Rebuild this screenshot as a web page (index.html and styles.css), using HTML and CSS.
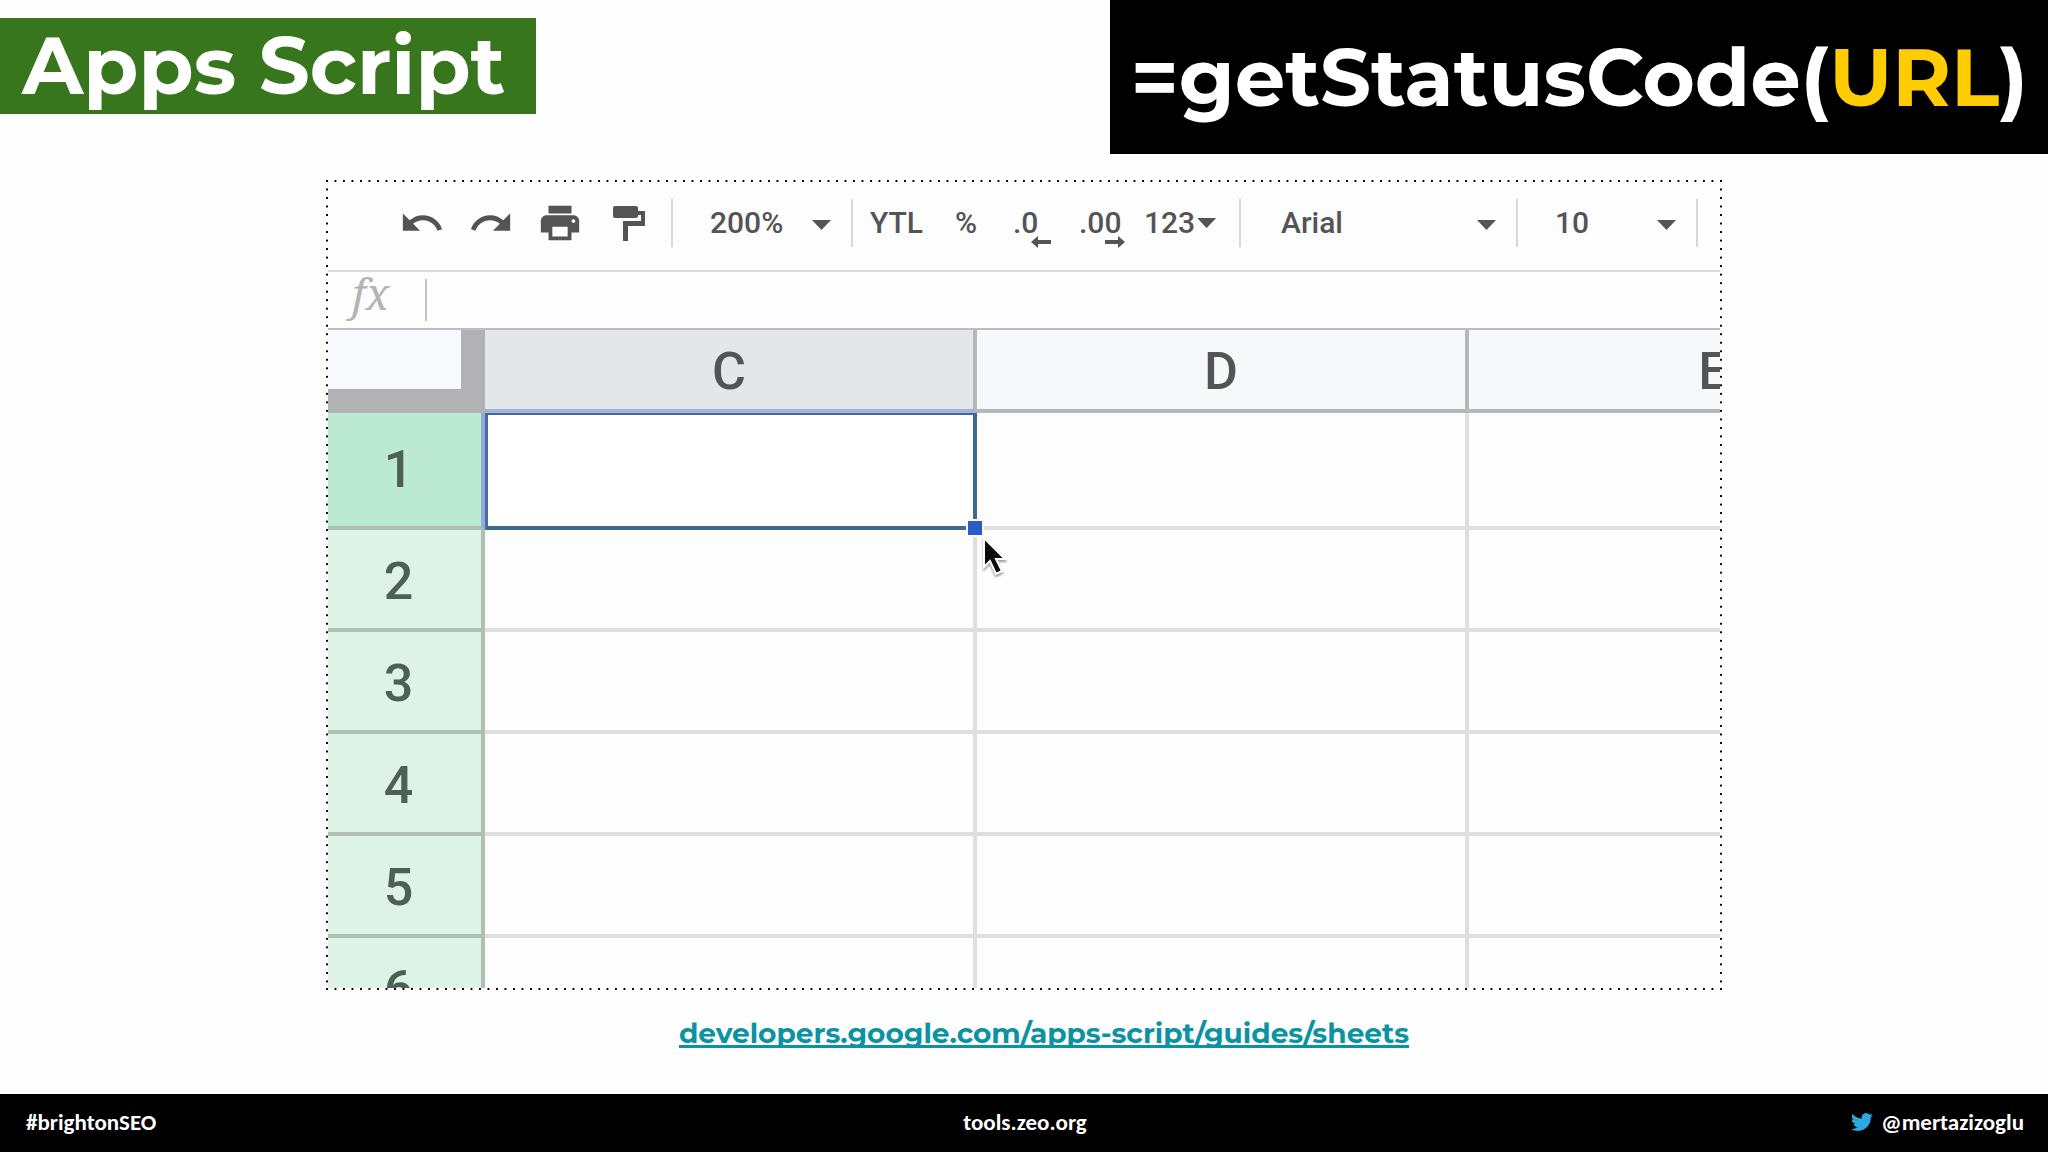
FILE: index.html
```html
<!DOCTYPE html>
<html lang="en">
<head>
  <meta charset="UTF-8">
  <meta name="viewport" content="width=device-width, initial-scale=1.0">
  <title>Apps Script - getStatusCode</title>
  <link rel="stylesheet" href="styles.css">
</head>
<body>
  <header class="header">
    <h1 class="title">Apps Script</h1>
    <p class="formula">=getStatusCode(<span>URL</span>)</p>
  </header>

  <main class="main">
    <div class="frame">
      <div class="sheet">
        <!-- Toolbar -->
        <div class="toolbar">
          <div class="group icons">
            <button type="button" aria-label="Undo">
              <svg viewBox="0 0 24 24" width="46" height="46"><path d="M12.5 8c-2.65 0-5.05.99-6.9 2.6L2 7v9h9l-3.62-3.62c1.39-1.16 3.16-1.88 5.12-1.88 3.54 0 6.55 2.31 7.6 5.5l2.37-.78C21.08 11.03 17.15 8 12.5 8z"/></svg>
            </button>
            <button type="button" aria-label="Redo">
              <svg viewBox="0 0 24 24" width="46" height="46"><path d="M18.4 10.6C16.55 8.99 14.15 8 11.5 8c-4.65 0-8.58 3.03-9.96 7.22L3.9 16c1.05-3.19 4.05-5.5 7.6-5.5 1.95 0 3.73.72 5.12 1.88L13 16h9V7l-3.6 3.6z"/></svg>
            </button>
            <button type="button" aria-label="Print">
              <svg viewBox="0 0 24 24" width="46" height="46"><path d="M19 8H5c-1.66 0-3 1.34-3 3v6h4v4h12v-4h4v-6c0-1.66-1.34-3-3-3zm-3 11H8v-5h8v5zm3-7c-.55 0-1-.45-1-1s.45-1 1-1 1 .45 1 1-.45 1-1 1zm-1-9H6v4h12V3z"/></svg>
            </button>
            <button type="button" aria-label="Paint format">
              <svg viewBox="0 0 32 35" width="32" height="35"><path d="M2 0h21q2 0 2 2v3h7v15H15v15h-5V15h18V9h-3v1q0 2-2 2H2q-2 0-2-2V2q0-2 2-2z"/></svg>
            </button>
          </div>

          <div class="group drop zoom">
            <select aria-label="Zoom"><option>200%</option></select>
          </div>

          <div class="group formats">
            <button type="button">YTL</button>
            <button type="button">%</button>
            <button type="button">.0
              <svg class="dec" viewBox="0 0 20 12" width="20" height="12"><path d="M0 6l7-6v4h13v4H7v4z"/></svg>
            </button>
            <button type="button">.00
              <svg class="inc" viewBox="0 0 20 12" width="20" height="12"><path d="M20 6l-7-6v4H0v4h13v4z"/></svg>
            </button>
            <button type="button" class="more">123<span class="caret"></span></button>
          </div>

          <div class="group drop font">
            <select aria-label="Font"><option>Arial</option></select>
          </div>

          <div class="group drop size">
            <select aria-label="Font size"><option>10</option></select>
          </div>
        </div>

        <!-- Formula bar -->
        <div class="formula-bar">
          <label for="fx">fx</label>
          <input type="text" id="fx">
        </div>

        <table class="grid">
          <colgroup>
            <col class="col-head">
            <col>
            <col>
            <col>
          </colgroup>
          <thead>
            <tr>
              <td class="corner"></td>
              <th class="active" scope="col">C</th>
              <th scope="col">D</th>
              <th scope="col">E</th>
            </tr>
          </thead>
          <tbody>
            <tr class="current">
              <th scope="row">1</th>
              <td class="selected">
                <span class="handle"></span>
                <svg class="cursor" viewBox="0 0 26 42" width="26" height="42"><path d="M3 3v29l6-6 6 13 6-3-6-12h9z"/></svg>
              </td>
              <td></td>
              <td></td>
            </tr>
            <tr><th scope="row">2</th><td></td><td></td><td></td></tr>
            <tr><th scope="row">3</th><td></td><td></td><td></td></tr>
            <tr><th scope="row">4</th><td></td><td></td><td></td></tr>
            <tr><th scope="row">5</th><td></td><td></td><td></td></tr>
            <tr><th scope="row">6</th><td></td><td></td><td></td></tr>
          </tbody>
        </table>
      </div>
    </div>

    <a class="docs-link" href="https://developers.google.com/apps-script/guides/sheets">developers.google.com/apps-script/guides/sheets</a>
  </main>

  <footer class="footer">
    <span>#brightonSEO</span>
    <span>tools.zeo.org</span>
    <span class="handle-name">
      <svg viewBox="0 0 24 24" width="22" height="22"><path d="M23.953 4.57a10 10 0 01-2.825.775 4.958 4.958 0 002.163-2.723c-.951.555-2.005.959-3.127 1.184a4.92 4.92 0 00-8.384 4.482C7.69 8.095 4.067 6.13 1.64 3.162a4.822 4.822 0 00-.666 2.475c0 1.71.87 3.213 2.188 4.096a4.904 4.904 0 01-2.228-.616v.06a4.923 4.923 0 003.946 4.827 4.996 4.996 0 01-2.212.085 4.936 4.936 0 004.604 3.417 9.867 9.867 0 01-6.102 2.105c-.39 0-.779-.023-1.17-.067a13.995 13.995 0 007.557 2.209c9.053 0 13.998-7.496 13.998-13.985 0-.21 0-.42-.015-.63A9.935 9.935 0 0024 4.59z"/></svg>
      @mertazizoglu
    </span>
  </footer>
</body>
</html>
```
FILE: styles.css
```css
* {
  box-sizing: border-box;
}

body {
  margin: 0;
  min-height: 100vh;
  display: flex;
  flex-direction: column;
  background: #fefefe;
  font-family: 'Montserrat', 'Inter', sans-serif;
}

/* Header */
.header {
  display: flex;
  justify-content: space-between;
  align-items: flex-start;
}

.title,
.formula {
  margin: 0;
  color: #fff;
  font-size: 80px;
  font-weight: 700;
  white-space: nowrap;
}

.title {
  margin-top: 18px;
  padding: 0 31px 0 22px;
  line-height: 96px;
  background: #38761d;
}

.formula {
  padding: 2px 20px 0 21px;
  line-height: 152px;
  background: #000;
}

.formula span {
  color: #ffcc00;
}

/* Spreadsheet */
.main {
  flex: 1;
  display: flex;
  flex-direction: column;
  align-items: center;
  padding-top: 26px;
}

.frame {
  width: 90%;
  max-width: 1396px;
  aspect-ratio: 1396 / 810;
  padding: 2px;
  background:
    linear-gradient(90deg, #000 2px, transparent 2px) 0 0 / calc(100% / 164) 2px repeat-x,
    linear-gradient(90deg, #000 2px, transparent 2px) 0 100% / calc(100% / 164) 2px repeat-x,
    linear-gradient(#000 2px, transparent 2px) 0 0 / 2px calc(100% / 95) repeat-y,
    linear-gradient(#000 2px, transparent 2px) 100% 0 / 2px calc(100% / 95) repeat-y;
}

.sheet {
  height: 100%;
  overflow: hidden;
  background: #fefdfe;
  color: #545456;
  font-family: 'Roboto', sans-serif;
}

.toolbar {
  display: flex;
  align-items: center;
  height: 90px;
  padding-bottom: 6px;
  border-bottom: 2px solid #dcdcdc;
}

.group {
  flex: none;
  display: flex;
  align-items: center;
  height: 48px;
  border-right: 2px solid #d8d8d8;
}

.toolbar button,
.toolbar select {
  padding: 0;
  border: none;
  outline: none;
  background: none;
  color: inherit;
  font-family: inherit;
  font-size: 30px;
  font-weight: 500;
  line-height: 48px;
}

.toolbar svg {
  display: block;
  fill: #545456;
}

.icons {
  width: 345px;
  padding-left: 59px;
}

.icons button {
  display: flex;
  justify-content: center;
  width: 69px;
}

.drop {
  position: relative;
}

.drop select {
  width: 100%;
  padding-left: 37px;
  appearance: none;
}

.drop::after,
.caret {
  content: '';
  width: 19px;
  height: 10px;
  background: #545456;
  clip-path: polygon(0 0, 100% 0, 50% 100%);
}

.drop::after {
  position: absolute;
  right: 20px;
  top: 21px;
  pointer-events: none;
}

.zoom,
.size {
  width: 180px;
}

.formats {
  display: grid;
  grid-template-columns: 85px 58px 66px 65px 1fr;
  width: 388px;
  padding-left: 17px;
}

.formats button {
  position: relative;
  text-align: left;
}

.formats svg {
  position: absolute;
  top: 37px;
}

.dec {
  left: 18px;
}

.inc {
  left: 26px;
}

.toolbar .more {
  display: flex;
  align-items: center;
  gap: 2px;
}

.font {
  width: 277px;
}

.font select {
  padding-left: 40px;
}

.formula-bar {
  display: flex;
  align-items: center;
  height: 58px;
  padding-left: 24px;
  border-bottom: 2px solid #bdbdbf;
}

.formula-bar label {
  width: 73px;
  padding-bottom: 12px;
  color: #b4b4b4;
  font-family: 'Noto Serif', 'Liberation Serif', serif;
  font-size: 43px;
  font-style: italic;
  line-height: 44px;
}

.formula-bar input {
  flex: 1;
  height: 42px;
  border: none;
  border-left: 2px solid #c4c4c4;
  outline: none;
  background: none;
  font-size: 30px;
}

.grid {
  table-layout: fixed;
  width: 1633px;
  border-spacing: 0;
  font-size: 52px;
}

.col-head {
  width: 157px;
}

.grid th,
.grid td {
  height: 102px;
  padding: 4px 0 0;
  border-right: 4px solid #e0dfe0;
  border-bottom: 4px solid #e0dfe0;
  font-weight: 500;
  line-height: 60px;
}

.grid thead th {
  height: 83px;
  background: #f7f8fa;
  border-color: #b6b7b9;
}

.grid thead .active {
  background: #e4e6e8;
  border-bottom-color: #a0b4dc;
}

.grid thead .corner {
  height: 83px;
  background: #f8f9fc;
  border-right: 24px solid #b2b2b4;
  border-bottom: 24px solid #b2b2b4;
}

.grid tbody th {
  padding: 6px 12px 0 0;
  background: #def2e7;
  border-color: #afbfb6;
  color: #4c6056;
}

.grid .current th,
.grid .current td {
  height: 117px;
  padding-top: 0;
}

.grid .current th {
  background: #bce9d1;
  border-right-color: #90acd8;
}

.grid .selected {
  position: relative;
  background: #fff;
  border: 4px solid #3f6a90;
  border-top: 2px solid #4a6598;
  border-left: 3px solid #4a6ba8;
}

.handle {
  position: absolute;
  right: -11px;
  bottom: -11px;
  width: 18px;
  height: 18px;
  border: 2px solid #fff;
  background: #2a5bc9;
}

.cursor {
  position: absolute;
  left: 100%;
  top: 100%;
  margin: 9px 0 0 8px;
  fill: #0a0a0a;
  stroke: #fff;
  stroke-width: 2px;
  filter: drop-shadow(0 2px 1px rgba(0, 0, 0, 0.4));
}

.docs-link {
  margin: 23px 0 0 40px;
  color: #0b93a3;
  font-size: 28px;
  font-weight: 700;
  line-height: 40px;
  text-decoration-thickness: 3px;
  text-decoration-skip-ink: none;
}

/* Footer */
.footer {
  display: grid;
  grid-template-columns: 1fr auto 1fr;
  align-items: center;
  height: 58px;
  padding: 0 24px 2px 26px;
  background: #000;
  color: #fff;
  font-family: 'Carlito', 'Lato', sans-serif;
  font-size: 23px;
  font-weight: 700;
}

.handle-name {
  display: flex;
  align-items: center;
  justify-content: flex-end;
  gap: 8px;
}

.handle-name svg {
  fill: #2aa9e0;
}
```
